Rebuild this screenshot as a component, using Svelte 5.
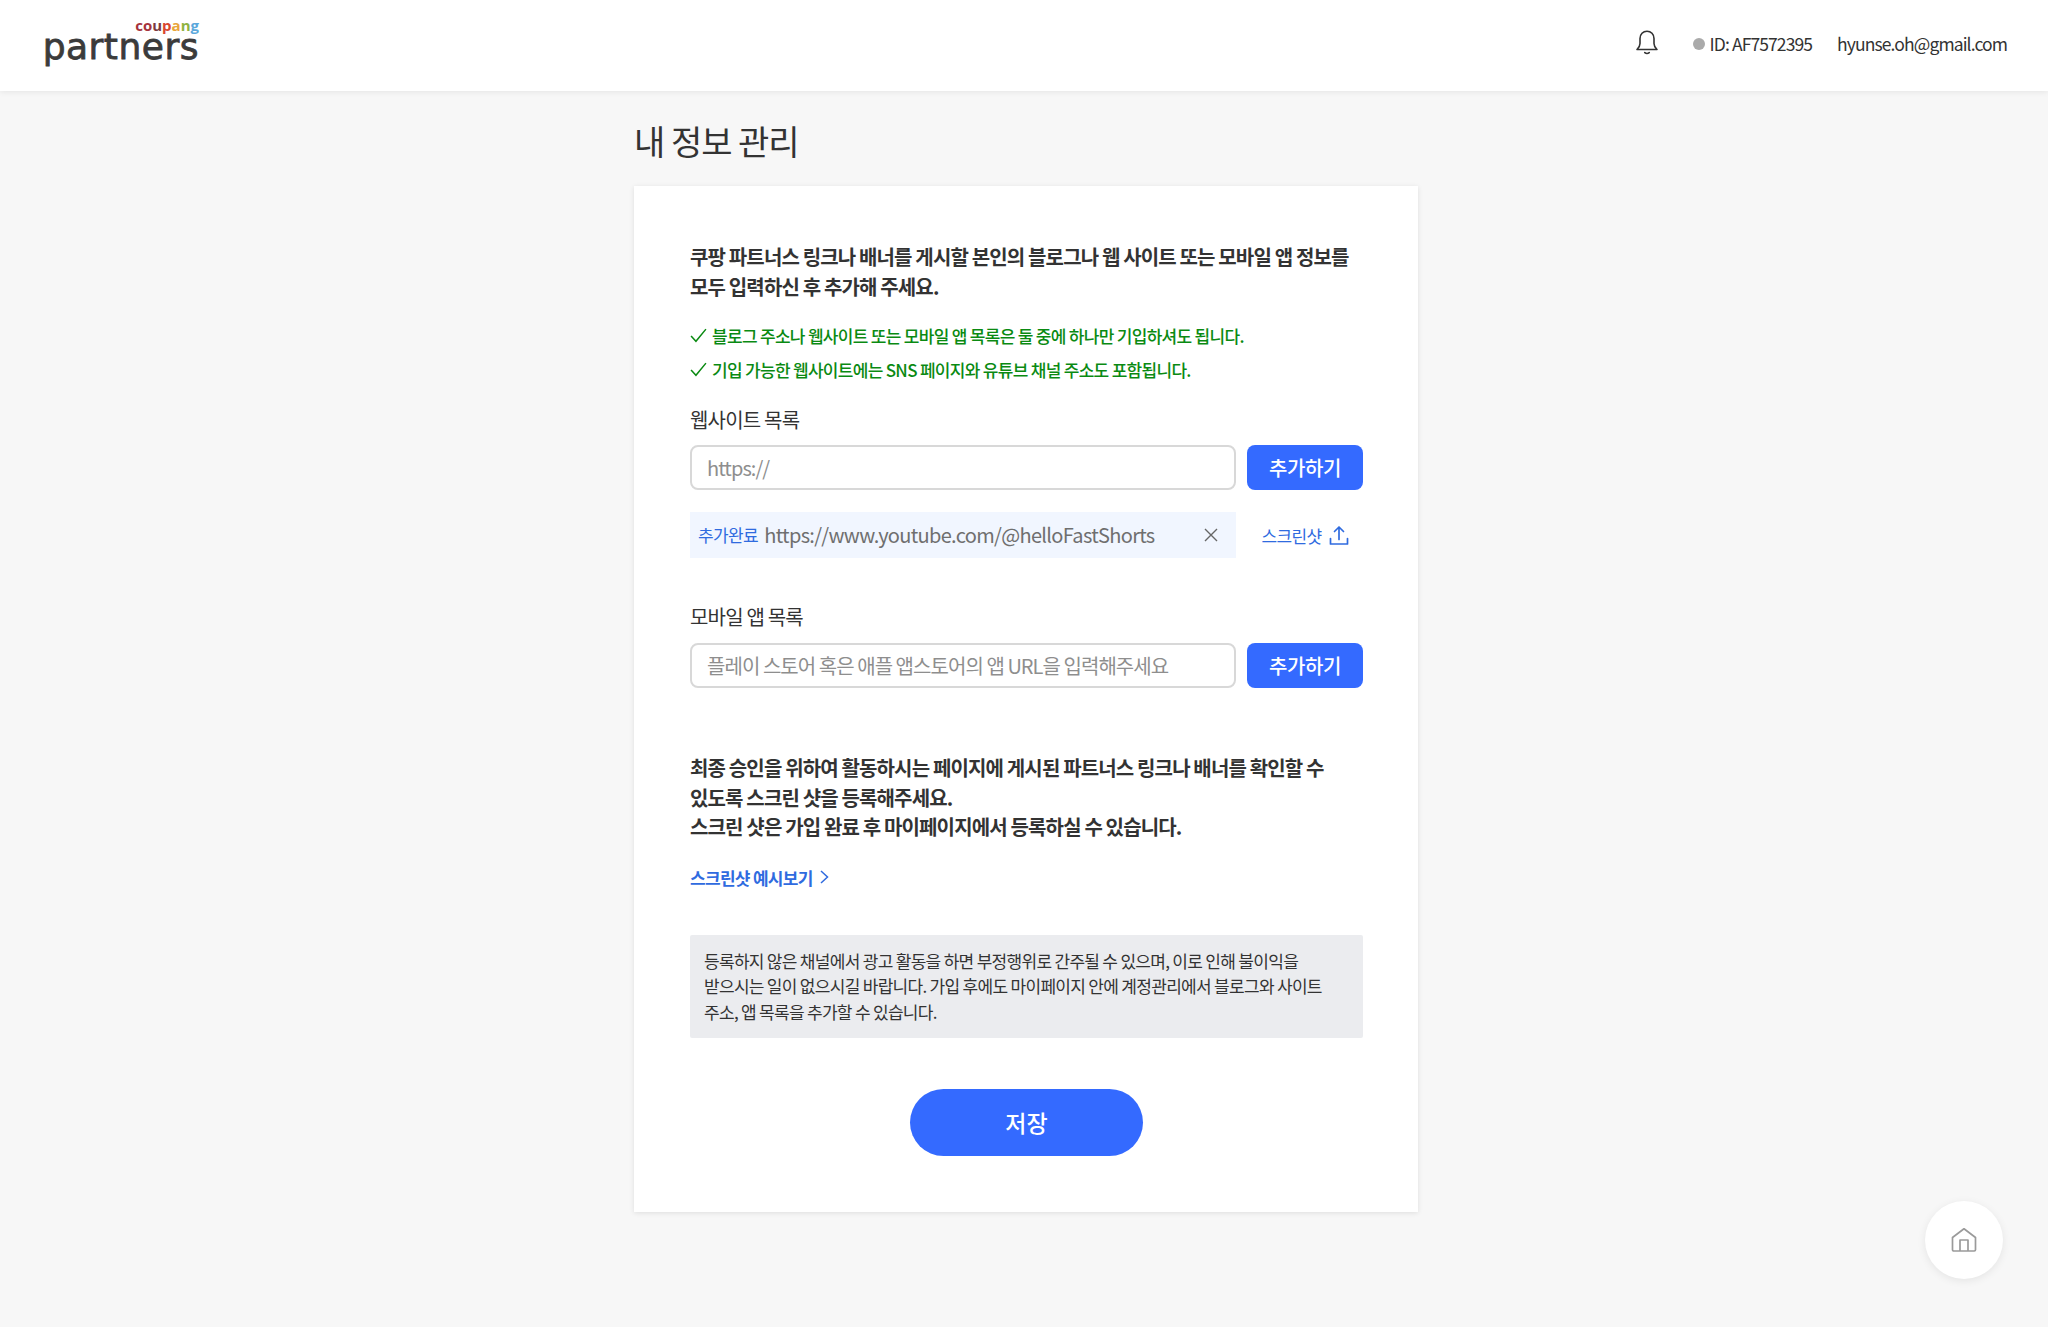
<script>
	const notes = [
		'블로그 주소나 웹사이트 또는 모바일 앱 목록은 둘 중에 하나만 기입하셔도 됩니다.',
		'기입 가능한 웹사이트에는 SNS 페이지와 유튜브 채널 주소도 포함됩니다.'
	];
	const logoLetters = [
		['c', '#a5333c'],
		['o', '#a5333c'],
		['u', '#7c3a3f'],
		['p', '#d9462f'],
		['a', '#e9a53a'],
		['n', '#8fb341'],
		['g', '#5ba8dc']
	];
</script>

<div class="page">
	<header class="topbar">
		<div class="logo">
			<span class="logo-top">{#each logoLetters as [ch, color]}<span style="color: {color}">{ch}</span>{/each}</span>
			<span class="logo-main">partners</span>
		</div>
		<div class="account">
			<svg class="bell" width="24" height="26" viewBox="0 0 24 26" fill="none" stroke="#333" stroke-width="1.6" stroke-linejoin="round" stroke-linecap="round">
				<path d="M2 20.5h20c-1.8-1.6-3-3.2-3-6V9.5C19 5.4 16 2.2 12 2.2S5 5.4 5 9.5v5c0 2.8-1.2 4.4-3 6z" />
				<path d="M9.8 23.6c1.2 1 3.2 1 4.4 0" />
			</svg>
			<span class="id"><i class="dot"></i>ID: AF7572395</span>
			<span class="email">hyunse.oh@gmail.com</span>
		</div>
	</header>

	<main class="content">
		<h1>내 정보 관리</h1>
		<section class="card">
			<p class="lead">쿠팡 파트너스 링크나 배너를 게시할 본인의 블로그나 웹 사이트 또는 모바일 앱 정보를<br />모두 입력하신 후 추가해 주세요.</p>

			<ul class="notes">
				{#each notes as note}
					<li>
						<svg width="17" height="15" viewBox="0 0 16 14" fill="none" stroke="#0a8a12" stroke-width="1.4"><path d="M1 7.5l4.6 5L15 1" /></svg>
						{note}
					</li>
				{/each}
			</ul>

			<div class="label first">웹사이트 목록</div>
			<div class="field-row">
				<input type="text" placeholder="https://" />
				<button class="add">추가하기</button>
			</div>
			<div class="added-row">
				<div class="added">
					<span class="done">추가완료</span>
					<span class="url">https://www.youtube.com/@helloFastShorts</span>
					<svg class="close" width="14" height="14" viewBox="0 0 14 14" stroke="#666" stroke-width="1.4"><path d="M1 1l12 12M13 1L1 13" /></svg>
				</div>
				<div class="shot">
					<span>스크린샷</span>
					<svg width="20" height="21" viewBox="0 0 20 21" fill="none" stroke="#2f6bdf" stroke-width="1.7" stroke-linecap="round" stroke-linejoin="round">
						<path d="M10 14.5V2M5.5 6.5L10 2l4.5 4.5" />
						<path d="M1.5 13.5v5.5h17v-5.5" />
					</svg>
				</div>
			</div>

			<div class="label second">모바일 앱 목록</div>
			<div class="field-row">
				<input type="text" placeholder="플레이 스토어 혹은 애플 앱스토어의 앱 URL을 입력해주세요" />
				<button class="add">추가하기</button>
			</div>

			<p class="lead approval">
				최종 승인을 위하여 활동하시는 페이지에 게시된 파트너스 링크나 배너를 확인할 수<br />
				있도록 스크린 샷을 등록해주세요.<br />
				스크린 샷은 가입 완료 후 마이페이지에서 등록하실 수 있습니다.
			</p>

			<div class="example">
				<span>스크린샷 예시보기</span>
				<svg width="9" height="14" viewBox="0 0 9 14" fill="none" stroke="#2f6bdf" stroke-width="1.5"><path d="M1 1l6.5 6L1 13" /></svg>
			</div>

			<div class="notice">
				등록하지 않은 채널에서 광고 활동을 하면 부정행위로 간주될 수 있으며, 이로 인해 불이익을<br />
				받으시는 일이 없으시길 바랍니다. 가입 후에도 마이페이지 안에 계정관리에서 블로그와 사이트<br />
				주소, 앱 목록을 추가할 수 있습니다.
			</div>

			<button class="save">저장</button>
		</section>
	</main>

	<div class="home">
		<svg width="26" height="26" viewBox="0 0 26 26" fill="none" stroke="#9a9a9a" stroke-width="1.7" stroke-linejoin="round">
			<path d="M1.5 10.5L13 1.8l11.5 8.7v12.2a1.3 1.3 0 0 1-1.3 1.3H2.8a1.3 1.3 0 0 1-1.3-1.3z" />
			<path d="M9 24V13h8v11" />
		</svg>
	</div>
</div>

<style>
	:global(body) {
		margin: 0;
		background: #f7f7f7;
	}

	.page {
		position: relative;
		height: 1327px;
		overflow: hidden;
		background: #f7f7f7;
		font-family: 'Noto Sans CJK KR', 'Noto Sans', sans-serif;
		color: #333;
	}

	.topbar {
		height: 91px;
		background: #fff;
		box-shadow: 0 1px 6px rgba(0, 0, 0, 0.08);
		display: flex;
		justify-content: space-between;
		align-items: center;
		padding: 0 41px 0 44px;
		box-sizing: border-box;
	}

	.logo {
		display: flex;
		flex-direction: column;
		align-items: flex-end;
		width: 155px;
		margin-top: -10px;
	}

	.logo-top {
		font-family: 'Open Sans', sans-serif;
		font-size: 15px;
		font-weight: 700;
		line-height: 15px;
		margin-bottom: -2px;
	}

	.logo-main {
		font-family: 'DejaVu Sans', sans-serif;
		font-size: 36px;
		line-height: 32px;
		letter-spacing: 0.5px;
		-webkit-text-stroke: 0.8px #3b3b3b;
		color: #3b3b3b;
	}

	.account {
		display: flex;
		align-items: center;
		font-size: 17.5px;
		letter-spacing: -0.9px;
		color: #333;
		margin-top: -4px;
	}

	.bell {
		margin-right: 34px;
		margin-top: -3px;
	}

	.id {
		display: flex;
		align-items: center;
		margin-right: 25px;
	}

	.dot {
		width: 12px;
		height: 12px;
		border-radius: 50%;
		background: #aaa;
		margin-right: 5px;
	}

	.content {
		width: 784px;
		margin-left: 634px;
	}

	h1 {
		margin: 0;
		height: 95px;
		font-size: 34px;
		font-weight: 400;
		line-height: 100px;
		letter-spacing: -1px;
		color: #333;
	}

	.card {
		background: #fff;
		box-shadow: 0 1px 5px rgba(0, 0, 0, 0.1);
		padding: 56px 55px 56px 56px;
		height: 1026px;
		box-sizing: border-box;
	}

	.lead {
		margin: 0;
		font-size: 20px;
		font-weight: 700;
		line-height: 29.5px;
		letter-spacing: -0.85px;
		color: #333;
	}

	.notes {
		list-style: none;
		margin: 17px 0 0;
		padding: 0;
		color: #0a8a12;
		font-size: 17px;
		font-weight: 500;
		letter-spacing: -0.7px;
	}

	.notes li {
		display: flex;
		align-items: center;
		gap: 5px;
		height: 34px;
	}

	.label {
		font-size: 20px;
		line-height: 29px;
		letter-spacing: -0.8px;
		color: #333;
	}

	.label.first {
		margin-top: 19px;
	}

	.label.second {
		margin-top: 44px;
	}

	.field-row {
		display: flex;
		gap: 11px;
		margin-top: 11px;
	}

	.label.second + .field-row {
		margin-top: 12px;
	}

	input {
		flex: 1;
		min-width: 0;
		height: 45px;
		box-sizing: border-box;
		border: 2px solid #d8d8d8;
		border-radius: 8px;
		padding: 0 15px;
		font: inherit;
		font-size: 20px;
		letter-spacing: -0.95px;
		color: #333;
		background: #fff;
		outline: none;
	}

	input::placeholder {
		color: #8e8e8e;
		opacity: 1;
	}

	.add {
		width: 116px;
		height: 45px;
		border: 0;
		border-radius: 8px;
		background: #346aff;
		color: #fff;
		font: inherit;
		font-size: 20px;
		font-weight: 500;
		letter-spacing: -0.4px;
	}

	.added-row {
		display: flex;
		gap: 11px;
		margin-top: 22px;
	}

	.added {
		width: 546px;
		height: 46px;
		box-sizing: border-box;
		background: #f1f6ff;
		display: flex;
		align-items: center;
		padding: 0 18px 2px 8px;
	}

	.close {
		margin-top: 2px;
	}

	.done {
		font-size: 17px;
		letter-spacing: -0.6px;
		color: #2f6bdf;
		margin-right: 6px;
	}

	.url {
		font-size: 20px;
		letter-spacing: -0.68px;
		color: #6f6f6f;
		flex: 1;
		white-space: nowrap;
	}

	.shot {
		width: 116px;
		display: flex;
		align-items: center;
		justify-content: center;
		gap: 7px;
		font-size: 17px;
		letter-spacing: -0.6px;
		color: #2f6bdf;
	}

	.approval {
		margin-top: 65px;
	}

	.example {
		display: flex;
		align-items: center;
		gap: 7px;
		margin-top: 23px;
		font-size: 17px;
		font-weight: 700;
		letter-spacing: -0.7px;
		color: #2f6bdf;
	}

	.notice {
		margin-top: 45.5px;
		height: 103px;
		box-sizing: border-box;
		background: #ebecef;
		border-radius: 2px;
		padding: 12.5px 14px;
		font-size: 17px;
		line-height: 25.5px;
		letter-spacing: -0.7px;
		color: #333;
	}

	.save {
		display: block;
		width: 233px;
		height: 67px;
		margin: 51px auto 0;
		padding: 0 0 2px;
		border: 0;
		border-radius: 34px;
		background: #346aff;
		color: #fff;
		font: inherit;
		font-size: 23px;
		font-weight: 500;
	}

	.home {
		position: absolute;
		left: 1925px;
		top: 1201px;
		width: 78px;
		height: 78px;
		border-radius: 50%;
		background: #fff;
		box-shadow: 0 2px 8px rgba(0, 0, 0, 0.08);
		display: flex;
		align-items: center;
		justify-content: center;
	}
</style>
